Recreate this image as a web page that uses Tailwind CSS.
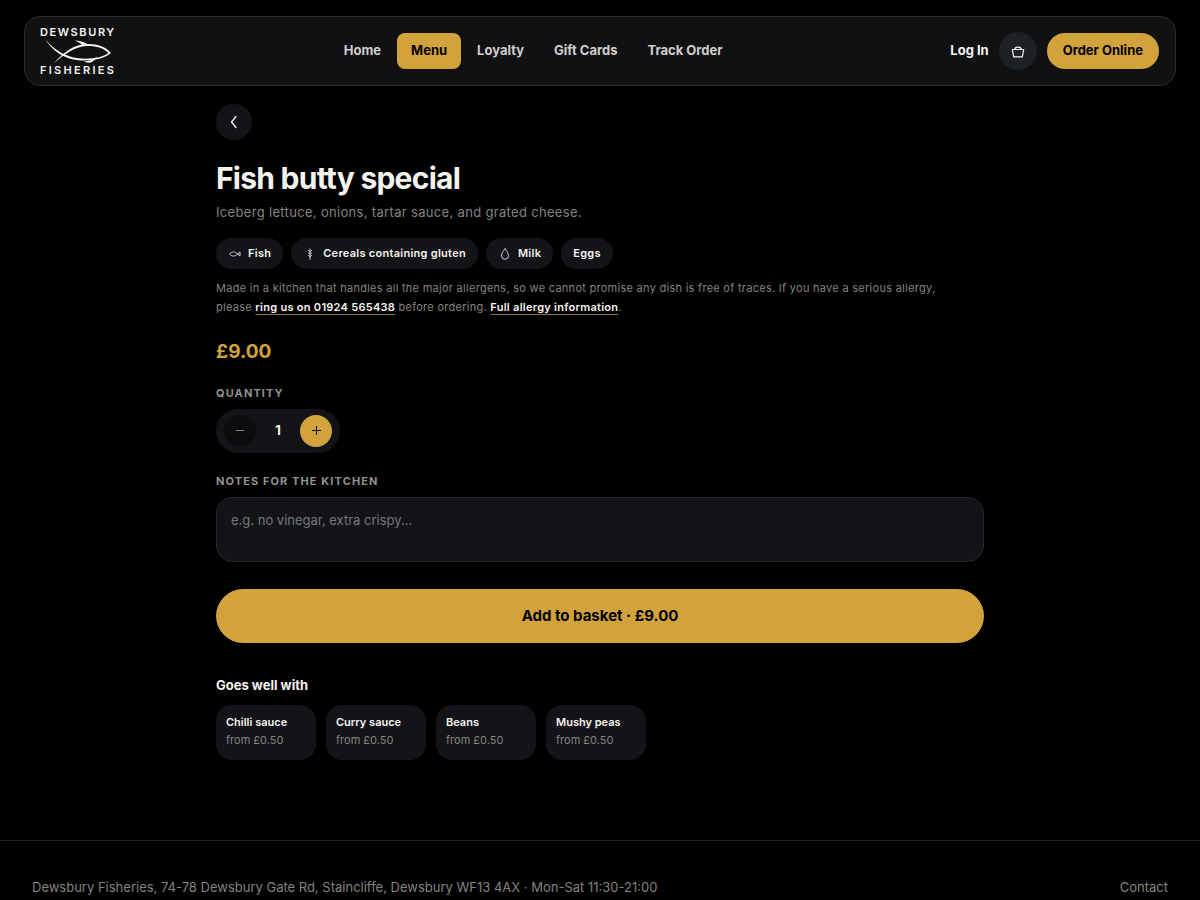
<!DOCTYPE html>
<html lang="en">
<head>
    <meta charset="UTF-8">
    <meta name="viewport" content="width=device-width, initial-scale=1.0">
    <title>Fish butty special | Dewsbury Fisheries</title>
    <script src="https://cdn.jsdelivr.net/npm/@tailwindcss/browser@4"></script>
</head>
<body class="bg-black text-[#f5f3ee] font-['Inter','Open_Sans',sans-serif] min-h-screen">

    <!-- Header -->
    <header class="mx-6 mt-4 h-[70px] pl-[15px] pr-4 flex items-center justify-between rounded-2xl border border-[#2b2c2f] bg-[#101113]">
        <a href="#" aria-label="Dewsbury Fisheries">
            <svg class="w-[76px] h-[50px]" viewBox="0 0 76 50" fill="none">
                <g fill="#f5f3ee" font-family="Inter, sans-serif" font-size="11" font-weight="600">
                    <text x="0" y="10" letter-spacing="1.6">DEWSBURY</text>
                    <text x="0" y="48" letter-spacing="2.3">FISHERIES</text>
                </g>
                <path d="M5 13C12 24 24 34.500 44 34.500C57 34.500 66 31.500 71 27C66 21 58 18 48 18C34 18 24 26 14 37C25 28 35 20 48 20C57 20 64 22.500 68.500 27C64 30.500 56 32.700 45 32.700C27 32.700 14 24 5 13Z" fill="#f5f3ee"/>
                <path d="M35 14.500Q42 14.500 47 18L42 19Q40 16.500 35 14.500Z" fill="#f5f3ee"/>
                <path d="M57 30.500Q54 32.500 52 34L44 35.500Q47 37 50 36.800Q55 35 57 30.500Z" fill="#f5f3ee"/>
            </svg>
        </a>

        <nav class="flex items-center gap-[2px] text-[13px] font-bold text-[#d0cfcb]">
            <a href="#" class="h-9 px-[14px] flex items-center rounded-lg">Home</a>
            <a href="#" class="h-9 px-[14px] flex items-center rounded-lg bg-[#d2a33c] text-black">Menu</a>
            <a href="#" class="h-9 px-[14px] flex items-center rounded-lg">Loyalty</a>
            <a href="#" class="h-9 px-[14px] flex items-center rounded-lg">Gift Cards</a>
            <a href="#" class="h-9 px-[14px] flex items-center rounded-lg">Track Order</a>
        </nav>

        <div class="flex items-center gap-[10px] text-[13px] font-bold">
            <a href="#">Log In</a>
            <button aria-label="Basket" class="size-[38px] rounded-full bg-[#1d2024] flex items-center justify-center">
                <svg class="size-4" viewBox="0 0 16 16" fill="none" stroke="currentColor" stroke-width="1.2" stroke-linejoin="round" stroke-linecap="round">
                    <path d="M2.300 6.500H13.700L12.300 13.800H3.700Z"/>
                    <path d="M4.500 6.500C5 3.200 11 3.200 11.500 6.500"/>
                </svg>
            </button>
            <a href="#" class="h-9 px-4 flex items-center rounded-full bg-[#d2a33c] text-black">Order Online</a>
        </div>
    </header>

    <!-- Dish -->
    <main class="max-w-[816px] mx-auto px-6 pt-[18px] pb-20">
        <button aria-label="Back" class="size-9 rounded-full bg-[#131418] flex items-center justify-center">
            <svg class="size-4" viewBox="0 0 16 16" fill="none" stroke="currentColor" stroke-width="1.3" stroke-linecap="round" stroke-linejoin="round">
                <path d="M10 2.500L5.500 8L10 13.500"/>
            </svg>
        </button>

        <h1 class="mt-5 text-[30px] leading-9 font-bold tracking-tight">Fish butty special</h1>
        <p class="mt-[6px] text-[13px] leading-5 tracking-wide text-[#85837f]">Iceberg lettuce, onions, tartar sauce, and grated cheese.</p>

        <!-- Allergens -->
        <ul class="mt-4 flex flex-wrap gap-2 text-[11px] font-semibold tracking-wide">
            <li class="h-[31px] px-3 flex items-center gap-[6px] rounded-full bg-[#131418]">
                <svg class="size-[14px]" viewBox="0 0 14 14" fill="none" stroke="#d0cfcb" stroke-linejoin="round">
                    <path d="M9.500 7C7.500 4.300 3.500 4.300 1.500 7C3.500 9.700 7.500 9.700 9.500 7L12 5V9Z"/>
                </svg>
                Fish
            </li>
            <li class="h-[31px] px-3 flex items-center gap-[6px] rounded-full bg-[#131418]">
                <svg class="size-[14px]" viewBox="0 0 14 14" fill="none" stroke="#d0cfcb" stroke-linecap="round">
                    <path d="M7 2V12.500M7 4.500L5.500 3.500M7 4.500L8.500 3.500M7 7L5.500 6M7 7L8.500 6M7 9.500L5.500 8.500M7 9.500L8.500 8.500"/>
                </svg>
                Cereals containing gluten
            </li>
            <li class="h-[31px] px-3 flex items-center gap-[6px] rounded-full bg-[#131418]">
                <svg class="size-[14px]" viewBox="0 0 14 14" fill="none" stroke="#d0cfcb" stroke-linejoin="round">
                    <path d="M7 1.500C5 4.500 3.500 6.500 3.500 8.800A3.500 3.500 0 0 0 10.500 8.800C10.500 6.500 9 4.500 7 1.500Z"/>
                </svg>
                Milk
            </li>
            <li class="h-[31px] px-3 flex items-center rounded-full bg-[#131418]">Eggs</li>
        </ul>

        <p class="mt-[10px] pr-4 text-[11px] leading-[19px] tracking-wide text-[#85837f]">
            Made in a kitchen that handles all the major allergens, so we cannot promise any dish is free of traces. If you have a serious allergy, please
            <a href="#" class="font-semibold text-[#f5f3ee] underline decoration-[#8a6e34] underline-offset-3">ring us on 01924 565438</a>
            before ordering.
            <a href="#" class="font-semibold text-[#f5f3ee] underline decoration-[#8a6e34] underline-offset-3">Full allergy information</a>.
        </p>

        <p class="mt-5 text-[19px] leading-[30px] font-bold text-[#d2a33c]">£9.00</p>

        <!-- Quantity -->
        <h2 class="mt-[18px] text-[11px] leading-[16px] font-bold tracking-widest text-[#93918c]">QUANTITY</h2>
        <div class="mt-2 w-fit h-11 px-2 flex items-center rounded-full bg-[#131418]">
            <button id="minus" aria-label="Fewer" disabled class="size-8 rounded-full flex items-center justify-center bg-[#d2a33c] text-black disabled:bg-[#0b0c0e] disabled:text-[#77766f]">
                <svg class="size-[14px]" viewBox="0 0 14 14" stroke="currentColor" stroke-linecap="round"><path d="M3 6.500H11"/></svg>
            </button>
            <output id="quantity" class="w-11 text-center text-[13px] font-bold">1</output>
            <button id="plus" aria-label="More" class="size-8 rounded-full flex items-center justify-center bg-[#d2a33c] text-black">
                <svg class="size-[14px]" viewBox="0 0 14 14" stroke="currentColor" stroke-linecap="round"><path d="M3.500 6.500H11.500M7.500 2.500V10.500"/></svg>
            </button>
        </div>

        <!-- Notes -->
        <label for="notes" class="block mt-5 text-[11px] leading-[16px] font-bold tracking-widest text-[#93918c]">NOTES FOR THE KITCHEN</label>
        <textarea id="notes" class="block mt-2 w-full h-[65px] px-[14px] py-3 resize-none rounded-2xl border border-[#26272b] bg-[#131418] text-[13px] leading-5 placeholder:text-[#77767a]" placeholder="e.g. no vinegar, extra crispy..."></textarea>

        <button id="add" class="mt-[27px] w-full h-[54px] rounded-full bg-[#d2a33c] text-black text-[15px] font-bold">Add to basket · £9.00</button>

        <!-- Extras -->
        <h2 class="mt-8 text-[13px] leading-5 font-bold">Goes well with</h2>
        <div class="mt-[10px] flex flex-wrap gap-[10px] text-[11px] leading-[18px]">
            <a href="#" class="w-[100px] h-[55px] px-[10px] pt-2 rounded-2xl bg-[#131418]">
                <span class="block font-semibold">Chilli sauce</span>
                <span class="block text-[#85837f]">from £0.50</span>
            </a>
            <a href="#" class="w-[100px] h-[55px] px-[10px] pt-2 rounded-2xl bg-[#131418]">
                <span class="block font-semibold">Curry sauce</span>
                <span class="block text-[#85837f]">from £0.50</span>
            </a>
            <a href="#" class="w-[100px] h-[55px] px-[10px] pt-2 rounded-2xl bg-[#131418]">
                <span class="block font-semibold">Beans</span>
                <span class="block text-[#85837f]">from £0.50</span>
            </a>
            <a href="#" class="w-[100px] h-[55px] px-[10px] pt-2 rounded-2xl bg-[#131418]">
                <span class="block font-semibold">Mushy peas</span>
                <span class="block text-[#85837f]">from £0.50</span>
            </a>
        </div>
    </main>

    <!-- Footer -->
    <footer class="border-t border-[#222325] px-8 py-9 flex justify-between text-[13px] leading-5 text-[#85837f]">
        <p>Dewsbury Fisheries, 74-78 Dewsbury Gate Rd, Staincliffe, Dewsbury WF13 4AX · Mon-Sat 11:30-21:00</p>
        <a href="#">Contact</a>
    </footer>

    <script>
        const quantity = document.getElementById("quantity");
        const minus = document.getElementById("minus");

        function setQuantity(n) {
            quantity.textContent = n;
            minus.disabled = n <= 1;
            document.getElementById("add").textContent = `Add to basket · £${(n * 9).toFixed(2)}`;
        }

        minus.onclick = () => setQuantity(Number(quantity.textContent) - 1);
        document.getElementById("plus").onclick = () => setQuantity(Number(quantity.textContent) + 1);
    </script>
</body>
</html>
